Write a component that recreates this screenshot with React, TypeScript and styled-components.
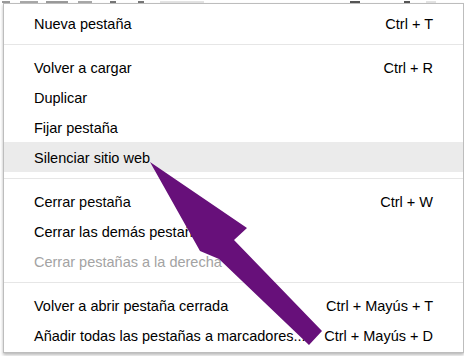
import styled, { createGlobalStyle } from "styled-components";

const GlobalStyle = createGlobalStyle`
  html, body {
    margin:0;
    padding:0;
    background:#ffffff;
  }
  body {
    font-family:"Liberation Sans", Arial, sans-serif;
  }
`;

interface RowProps {
  $hover?: boolean;
  $disabled?: boolean;
}

type Item =
  | { kind: "item"; label: string; shortcut?: string; hover?: boolean; disabled?: boolean }
  | { kind: "sep" };

const items: Item[] = [
  { kind: "item", label: "Nueva pestaña", shortcut: "Ctrl + T" },
  { kind: "sep" },
  { kind: "item", label: "Volver a cargar", shortcut: "Ctrl + R" },
  { kind: "item", label: "Duplicar" },
  { kind: "item", label: "Fijar pestaña" },
  { kind: "item", label: "Silenciar sitio web", hover: true },
  { kind: "sep" },
  { kind: "item", label: "Cerrar pestaña", shortcut: "Ctrl + W" },
  { kind: "item", label: "Cerrar las demás pestañas" },
  { kind: "item", label: "Cerrar pestañas a la derecha", disabled: true },
  { kind: "sep" },
  { kind: "item", label: "Volver a abrir pestaña cerrada", shortcut: "Ctrl + Mayús + T" },
  { kind: "item", label: "Añadir todas las pestañas a marcadores...", shortcut: "Ctrl + Mayús + D" },
];

const Page = styled.div`
  position:relative;
  width:464px;
  height:356px;
  overflow:hidden;
  background:#ffffff;
`;

// bits of the page behind the menu, only the lowest 3px show
const TopStrip = styled.div`
  height:3px;
  display:flex;
  align-items:flex-end;
  overflow:hidden;
`;

const StripBit = styled.span<{ $w: number; $gap: number; $tone: string }>`
  height:2px;
  width:${({ $w }) => $w}px;
  margin-left:${({ $gap }) => $gap}px;
  background:${({ $tone }) => $tone};
`;

const Menu = styled.div`
  position:absolute;
  left:3px;
  top:3px;
  width:459px;
  border:1px solid #bdbdbd;
  background:#ffffff;
  box-shadow:0 2px 3px rgba(0,0,0,0.28);
  padding:4px 0 2px;
`;

const Row = styled.div<RowProps>`
  height:30px;
  display:flex;
  align-items:center;
  justify-content:space-between;
  padding:0 30px;
  font-size:14.5px;
  color:${({ $disabled }) => ($disabled ? "#a3a3a3" : "#000000")};
  background:${({ $hover }) => ($hover ? "#ebebeb" : "transparent")};
  white-space:nowrap;
`;

const Label = styled.span`
  padding-top:1px;
`;

const Shortcut = styled.span`
  padding-top:1px;
`;

const Separator = styled.div`
  height:14px;
  display:flex;
  align-items:center;
  &::after {
    content:"";
    flex:1;
    height:1px;
    margin-top:-1px;
    background:#e6e6e6;
  }
`;

const Pointer = styled.svg`
  position:absolute;
  left:0;
  top:0;
  pointer-events:none;
`;

const App = () => {
  return (
    <Page>
      <GlobalStyle />
      <TopStrip>
        <StripBit $w={8} $gap={2} $tone="#9a9a9a" />
        <StripBit $w={18} $gap={10} $tone="#a8a8a8" />
        <StripBit $w={22} $gap={8} $tone="#9a9a9a" />
        <StripBit $w={14} $gap={10} $tone="#a8a8a8" />
        <StripBit $w={6} $gap={18} $tone="#777777" />
        <StripBit $w={6} $gap={22} $tone="#777777" />
        <StripBit $w={44} $gap={16} $tone="#e3e3e3" />
        <StripBit $w={10} $gap={146} $tone="#555555" />
        <StripBit $w={6} $gap={44} $tone="#555555" />
        <StripBit $w={10} $gap={16} $tone="#e3e3e3" />
      </TopStrip>
      <Menu>
        {items.map((it, i) =>
          it.kind === "sep" ? (
            <Separator key={i} />
          ) : (
            <Row key={i} $hover={it.hover} $disabled={it.disabled}>
              <Label>{it.label}</Label>
              {it.shortcut && <Shortcut>{it.shortcut}</Shortcut>}
            </Row>
          )
        )}
      </Menu>
      <Pointer width="464" height="356" viewBox="0 0 464 356">
        <polygon
          points="150,162 247,228 234,240 322,331 309,345 219,259 200,251"
          fill="#67107a"
        />
      </Pointer>
    </Page>
  );
};

export default App;
